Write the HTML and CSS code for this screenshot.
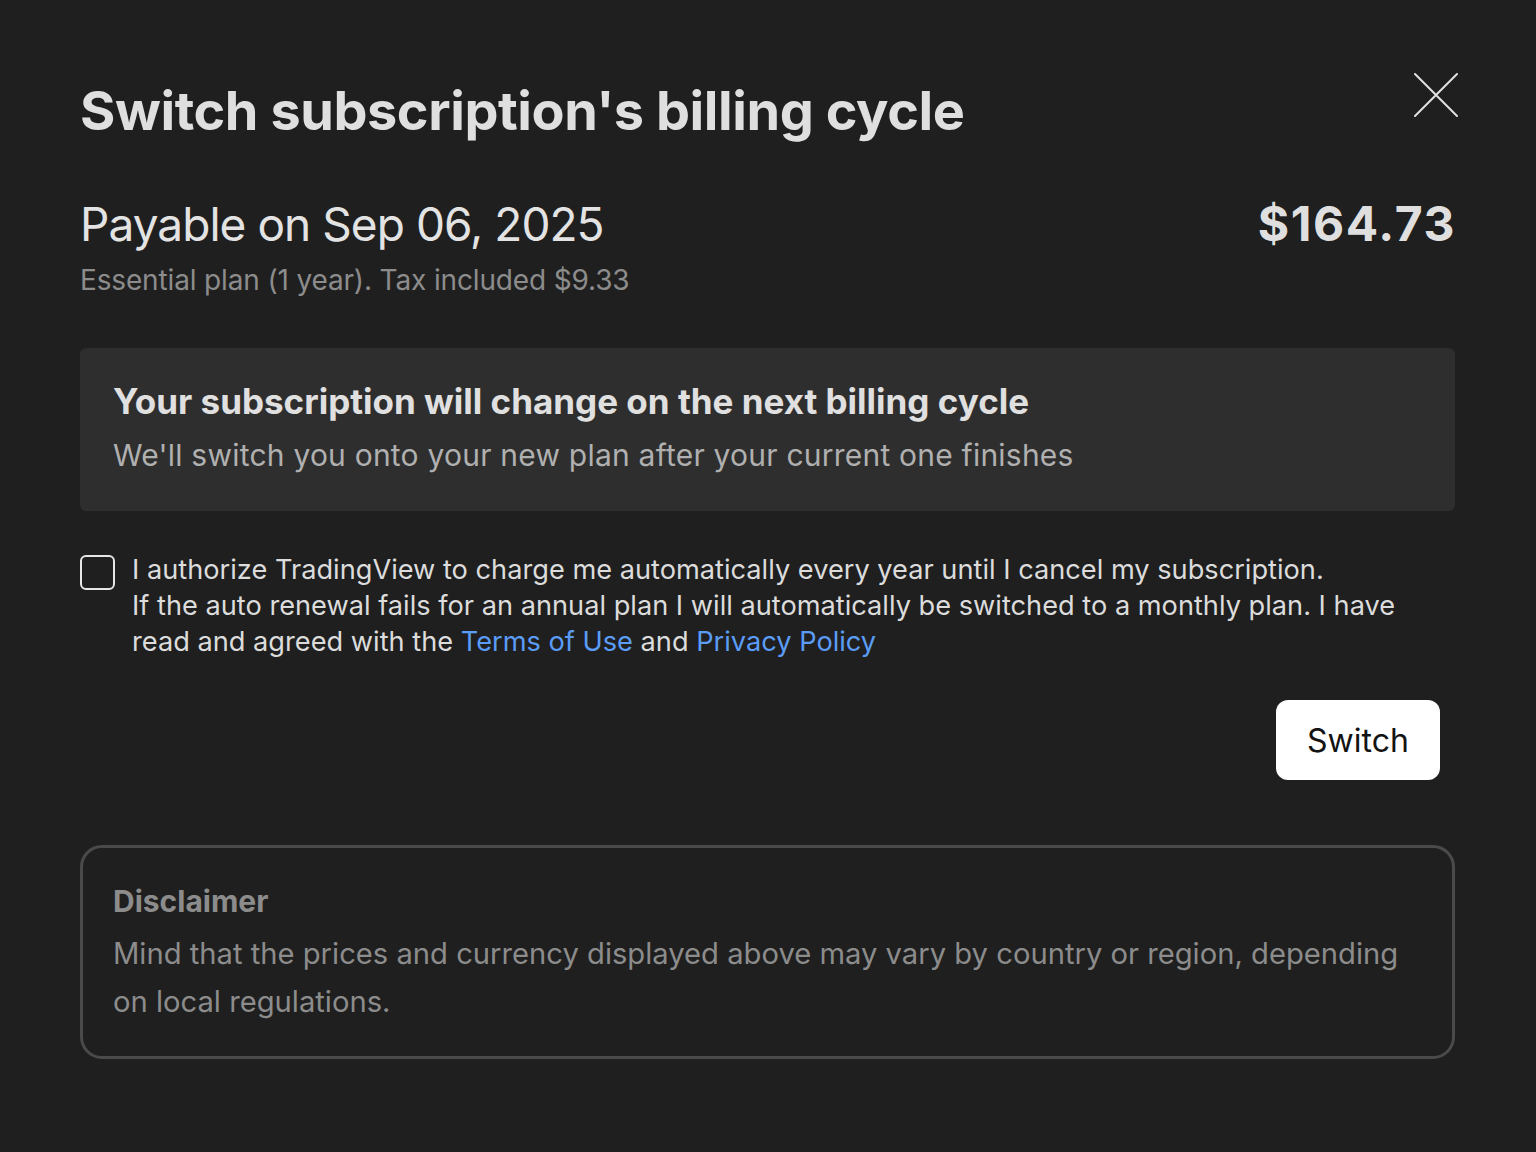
FILE: index.html
```html
<!DOCTYPE html>
<html lang="en">
<head>
<meta charset="utf-8">
<title>Switch subscription's billing cycle</title>
<link rel="stylesheet" href="styles.css">
</head>
<body>
<div class="modal">
  <header class="modal-header">
    <h1 class="title">Switch subscription's billing cycle</h1>
    <button class="close" aria-label="Close">
      <svg width="44" height="44" viewBox="0 0 44 44" fill="none" stroke="#e0e0e0" stroke-width="2" stroke-linecap="round"><path d="M1 1L43 43M43 1L1 43"/></svg>
    </button>
  </header>

  <div class="pay-row">
    <div class="pay-date">Payable on Sep 06, 2025</div>
    <div class="pay-amount">$164.73</div>
  </div>
  <div class="pay-sub">Essential plan (1 year). Tax included $9.33</div>

  <div class="notice">
    <div class="notice-title">Your subscription will change on the next billing cycle</div>
    <div class="notice-text">We'll switch you onto your new plan after your current one finishes</div>
  </div>

  <label class="consent">
    <span class="checkbox"></span>
    <span class="consent-text">I authorize TradingView to charge me automatically every year until I cancel my subscription.<br>If the auto renewal fails for an annual plan I will automatically be switched to a monthly plan. I have<br>read and agreed with the <a class="link" href="#">Terms of Use</a> and <a class="link" href="#">Privacy Policy</a></span>
  </label>

  <div class="actions">
    <button class="btn-switch">Switch</button>
  </div>

  <section class="disclaimer">
    <div class="disclaimer-title">Disclaimer</div>
    <div class="disclaimer-text">Mind that the prices and currency displayed above may vary by country or region, depending on local regulations.</div>
  </section>
</div>
</body>
</html>
```

FILE: styles.css
```css
* { box-sizing: border-box; }
html, body {
  margin: 0;
  padding: 0;
  background: #1f1f1f;
}
body {
  font-family: Inter, "Noto Sans", sans-serif;
  color: #dedede;
  width: 1536px;
  height: 1152px;
  overflow: hidden;
}
.modal {
  padding: 79px 81px 0 80px;
}
.modal-header {
  display: flex;
  justify-content: space-between;
  align-items: flex-start;
}
.title {
  margin: 0;
  font-size: 54px;
  line-height: 64px;
  font-weight: 700;
  color: #dfdfdf;
  letter-spacing: -0.42px;
}
.close {
  margin: -6px -3px 0 0;
  padding: 0;
  border: 0;
  background: none;
  width: 44px;
  height: 44px;
  display: flex;
}
.pay-row {
  display: flex;
  justify-content: space-between;
  align-items: baseline;
  margin-top: 53px;
}
.pay-date {
  font-size: 46px;
  line-height: 56px;
  font-weight: 400;
  color: #e3e3e3;
  letter-spacing: -0.95px;
}
.pay-amount {
  font-size: 48px;
  line-height: 56px;
  font-weight: 700;
  color: #dfdfdf;
  letter-spacing: 1.6px;
  margin-right: -1px;
}
.pay-sub {
  margin-top: 10px;
  font-size: 28px;
  line-height: 36px;
  color: #8c8c8c;
  letter-spacing: -0.15px;
}
.notice {
  margin-top: 50px;
  background: #2e2e2e;
  border-radius: 6px;
  padding: 31px 32px 36px 33px;
}
.notice-title {
  font-size: 35px;
  line-height: 44px;
  font-weight: 700;
  color: #e0e0e0;
}
.notice-text {
  margin-top: 12px;
  font-size: 30px;
  line-height: 40px;
  color: #b0b0b0;
  letter-spacing: 0.22px;
}
.consent {
  display: flex;
  align-items: flex-start;
  gap: 17px;
  margin-top: 41px;
}
.checkbox {
  flex: none;
  width: 35px;
  height: 35px;
  margin-top: 3px;
  border: 2px solid #e6e6e6;
  border-radius: 6px;
}
.consent-text {
  font-size: 27.2px;
  line-height: 36px;
  color: #dcdcdc;
  white-space: nowrap;
}
.link {
  color: #5b9cf6;
  text-decoration: none;
}
.actions {
  display: flex;
  justify-content: flex-end;
  margin-top: 40px;
  padding-right: 15px;
}
.btn-switch {
  width: 164px;
  height: 80px;
  border: 0;
  border-radius: 12px;
  background: #ffffff;
  color: #131313;
  font-family: Inter, "Noto Sans", sans-serif;
  font-size: 32px;
  font-weight: 400;
  padding: 0;
}
.disclaimer {
  margin-top: 65px;
  border: 3px solid #4a4a4a;
  border-radius: 22px;
  padding: 33px 30px 30px 30px;
}
.disclaimer-title {
  font-size: 30px;
  line-height: 40px;
  font-weight: 700;
  color: #8c8c8c;
}
.disclaimer-text {
  margin-top: 9px;
  font-size: 29.2px;
  line-height: 48px;
  color: #8c8c8c;
}
```
